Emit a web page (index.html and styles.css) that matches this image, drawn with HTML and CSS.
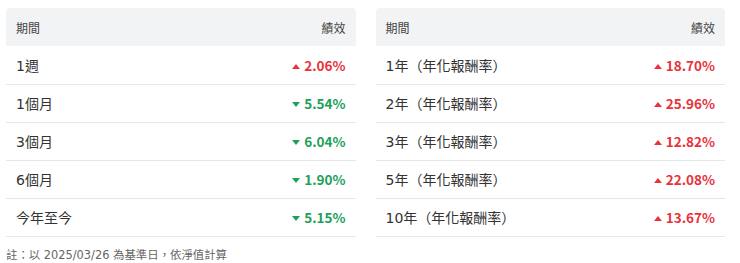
FILE: index.html
```html
<!DOCTYPE html>
<html lang="zh-Hant">
<head>
  <meta charset="UTF-8" />
  <title>績效</title>
  <link rel="stylesheet" href="styles.css">
</head>
<body>
  <div class="perf">
    <div class="tables">
      <table class="perf-table">
        <thead>
          <tr><th>期間</th><th class="num">績效</th></tr>
        </thead>
        <tbody>
          <tr><td>1週</td><td class="num up"><span class="arrow"></span>2.06%</td></tr>
          <tr><td>1個月</td><td class="num down"><span class="arrow"></span>5.54%</td></tr>
          <tr><td>3個月</td><td class="num down"><span class="arrow"></span>6.04%</td></tr>
          <tr><td>6個月</td><td class="num down"><span class="arrow"></span>1.90%</td></tr>
          <tr><td>今年至今</td><td class="num down"><span class="arrow"></span>5.15%</td></tr>
        </tbody>
      </table>

      <table class="perf-table">
        <thead>
          <tr><th>期間</th><th class="num">績效</th></tr>
        </thead>
        <tbody>
          <tr><td>1年（年化報酬率）</td><td class="num up"><span class="arrow"></span>18.70%</td></tr>
          <tr><td>2年（年化報酬率）</td><td class="num up"><span class="arrow"></span>25.96%</td></tr>
          <tr><td>3年（年化報酬率）</td><td class="num up"><span class="arrow"></span>12.82%</td></tr>
          <tr><td>5年（年化報酬率）</td><td class="num up"><span class="arrow"></span>22.08%</td></tr>
          <tr><td>10年（年化報酬率）</td><td class="num up"><span class="arrow"></span>13.67%</td></tr>
        </tbody>
      </table>
    </div>
    <p class="note">註：以 2025/03/26 為基準日，依淨值計算</p>
  </div>
</body>
</html>
```

FILE: styles.css
```css
* { margin: 0; padding: 0; box-sizing: border-box; }
body {
  font-family: "DejaVu Sans", "Noto Sans CJK TC", sans-serif;
  background: #fff;
  color: #333;
}
.perf {
  padding: 8px 15px 0 6px;
}
.tables {
  display: grid;
  grid-template-columns: 1fr 1fr;
  gap: 20px;
}
.perf-table {
  width: 100%;
  border-collapse: collapse;
}
.perf-table th {
  background-color: #f2f3f5;
  font-size: 12px;
  font-weight: normal;
  color: #444;
  text-align: left;
  height: 38px;
  padding: 0 10px;
}
.perf-table th:first-child { border-top-left-radius: 4px; }
.perf-table th:last-child { border-top-right-radius: 4px; }
.perf-table td {
  height: 38px;
  padding: 0 10px;
  font-size: 14px;
  border-bottom: 1px solid #e6e7e9;
}
.perf-table .num { text-align: right; }
.perf-table td.num {
  font-family: "Noto Sans CJK TC", sans-serif;
  font-size: 13.5px;
  font-weight: bold;
}
.up { color: #e8333c; }
.down { color: #1e9f5b; }
.arrow {
  display: inline-block;
  width: 0;
  height: 0;
  margin-right: 4px;
  border-left: 4px solid transparent;
  border-right: 4px solid transparent;
  vertical-align: 2px;
}
.up .arrow { border-bottom: 5px solid currentColor; }
.down .arrow { border-top: 5px solid currentColor; }
.note {
  font-size: 11.4px;
  color: #666;
  margin-top: 9px;
}
```
